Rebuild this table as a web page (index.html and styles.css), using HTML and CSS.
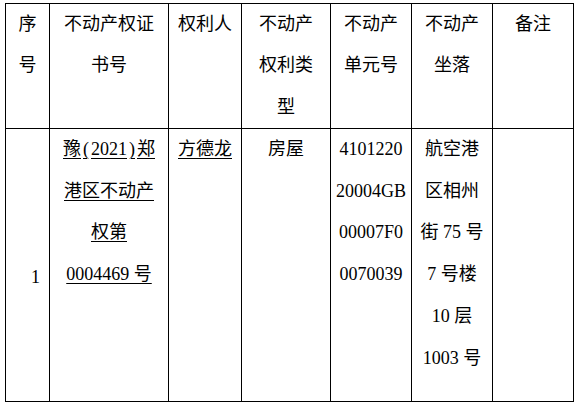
FILE: index.html
```html
<!DOCTYPE html>
<html lang="zh">
<head>
<meta charset="utf-8">
<link rel="stylesheet" href="styles.css">
</head>
<body>
<div class="sheet">
  <div class="cell head">序<br>号</div>
  <div class="cell head">不动产权证<br>书号</div>
  <div class="cell head">权利人</div>
  <div class="cell head">不动产<br>权利类<br>型</div>
  <div class="cell head">不动产<br>单元号</div>
  <div class="cell head">不动产<br>坐落</div>
  <div class="cell head">备注</div>

  <div class="cell num">1</div>
  <div class="cell body"><span class="ul">豫<span class="p">(</span>2021<span class="p">)</span>郑</span><br><span class="ul">港区不动产</span><br><span class="ul">权第</span><br><span class="ul">0004469 号</span></div>
  <div class="cell body"><span class="ul">方德龙</span></div>
  <div class="cell body">房屋</div>
  <div class="cell body">4101220<br>20004GB<br>00007F0<br>0070039</div>
  <div class="cell body">航空港<br>区相州<br>街 75 号<br>7 号楼<br>10 层<br>1003 号</div>
  <div class="cell body"></div>
</div>
</body>
</html>
```

FILE: styles.css
```css
html, body {
  margin: 0;
  padding: 0;
  background: #ffffff;
}

body {
  font-family: "Liberation Serif", "Noto Sans CJK SC", serif;
  font-size: 18px;
  color: #000000;
}

.sheet {
  margin: 3px 0 0 5px;
  width: 569px;
  box-sizing: border-box;
  display: grid;
  grid-template-columns: 43px 118px 72px 88px 80px 80px 80px;
  grid-template-rows: 124px 272px;
  gap: 1px;
  padding: 1px;
  background: #000000;
}

.cell {
  background: #ffffff;
  text-align: center;
  line-height: 41.4px;
}

.body {
  line-height: 41.7px;
}

.num {
  display: flex;
  align-items: center;
  justify-content: center;
  padding: 26px 0 0 16px;
  box-sizing: border-box;
}

.ul {
  text-decoration: underline;
  text-decoration-thickness: 1px;
  text-underline-offset: 3px;
}

.p {
  margin: 0 2px;
}
```
